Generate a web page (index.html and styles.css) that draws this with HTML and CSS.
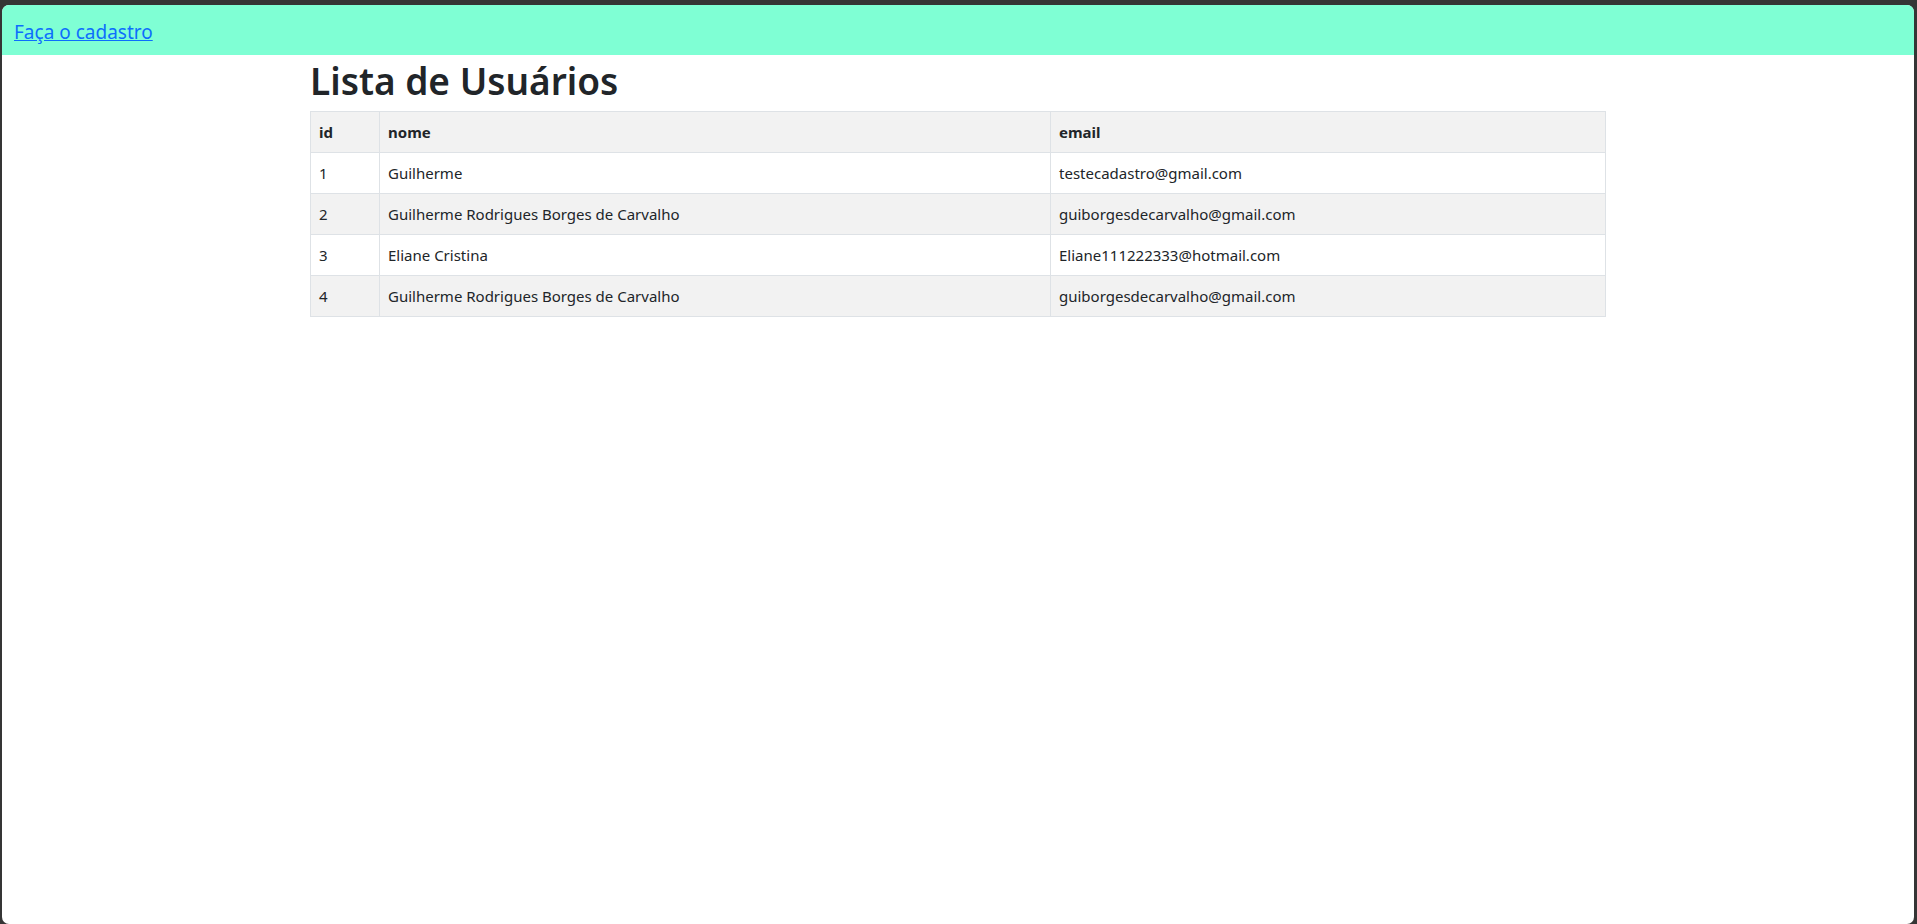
FILE: index.html
```html
<!DOCTYPE html>
<html lang="pt-BR">
<head>
<meta charset="utf-8">
<title>Lista de Usuários</title>
<link rel="stylesheet" href="styles.css">
</head>
<body>
<div class="window">
  <header class="topbar">
    <a href="#" class="topbar-link">Faça o cadastro</a>
  </header>
  <main class="container">
    <h1 class="title">Lista de Usuários</h1>
    <table class="users">
      <colgroup>
        <col class="col-id">
        <col class="col-nome">
        <col class="col-email">
      </colgroup>
      <thead>
        <tr><th>id</th><th>nome</th><th>email</th></tr>
      </thead>
      <tbody>
        <tr><td>1</td><td>Guilherme</td><td>testecadastro@gmail.com</td></tr>
        <tr><td>2</td><td>Guilherme Rodrigues Borges de Carvalho</td><td>guiborgesdecarvalho@gmail.com</td></tr>
        <tr><td>3</td><td>Eliane Cristina</td><td>Eliane111222333@hotmail.com</td></tr>
        <tr><td>4</td><td>Guilherme Rodrigues Borges de Carvalho</td><td>guiborgesdecarvalho@gmail.com</td></tr>
      </tbody>
    </table>
  </main>
</div>
</body>
</html>
```
FILE: styles.css
```css
* { box-sizing: border-box; }
html, body {
  margin: 0;
  height: 100%;
}
body {
  background: #353535;
  padding: 5px 3px 0 2px;
  font-family: "Noto Sans", "Open Sans", sans-serif;
  color: #212529;
  font-size: 16px;
  line-height: 1.5;
}
.window {
  background: #fff;
  height: 100%;
  border-radius: 7px;
  overflow: hidden;
}
.topbar {
  background: #7fffd4;
  height: 50px;
  padding: 12px 12px 8px;
}
.topbar-link {
  color: #0d6efd;
  font-size: 19px;
  line-height: 30px;
  text-decoration: underline;
}
.container {
  max-width: 1320px;
  margin: 0 auto;
  padding: 0 12px;
}
.title {
  margin: 0 0 6px;
  padding-top: 2px;
  font-size: 37px;
  font-weight: 600;
  line-height: 48px;
}
.users {
  width: 100%;
  border-collapse: collapse;
  table-layout: fixed;
  border: 1px solid #dee2e6;
}
.col-id { width: 69px; }
.col-nome { width: 671px; }
.users th, .users td {
  border: 1px solid #dee2e6;
  padding: 8px;
  text-align: left;
  vertical-align: middle;
  height: 41px;
  font-size: 15px;
}
.users th { font-weight: 700; }
.users thead tr,
.users tbody tr:nth-child(even) {
  background: #f2f2f2;
}
```
